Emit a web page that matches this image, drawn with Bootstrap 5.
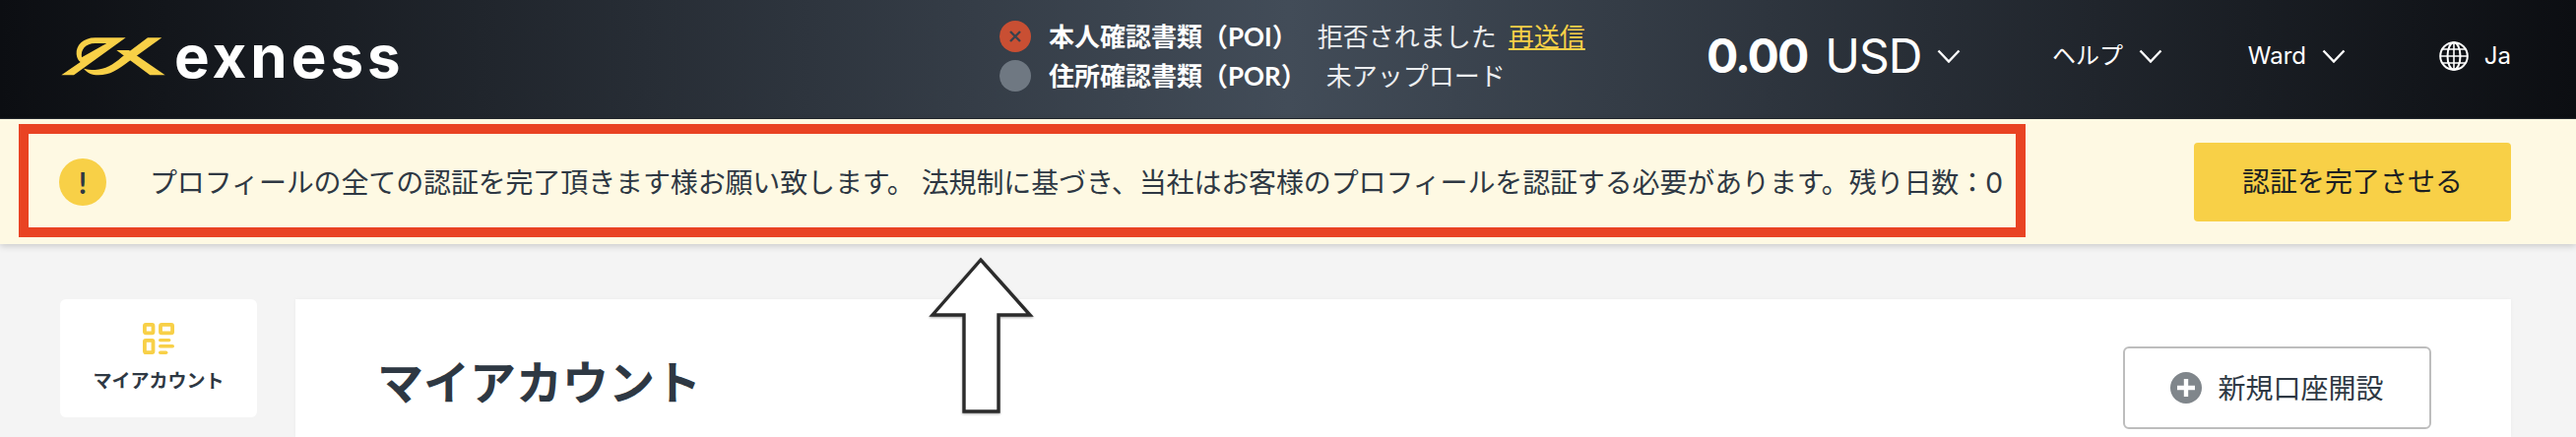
<!DOCTYPE html>
<html lang="ja">
<head>
    <meta charset="UTF-8">
    <meta name="viewport" content="width=device-width, initial-scale=1.0">
    <title>Exness</title>
    <link href="https://cdn.jsdelivr.net/npm/bootstrap@5.3.2/dist/css/bootstrap.min.css" rel="stylesheet">
    <style>
        :root {
            --gold: #f8d047;
            --ink: #2e3843;
        }

        html, body {
            height: 444px;
            overflow: hidden;
        }

        body {
            background-color: #f4f4f4;
            color: var(--ink);
            font-family: Lato, "Noto Sans CJK JP", sans-serif;
        }

        /* header */
        .top-bar {
            height: 121px;
            padding: 0 66px 6px 55px;
            color: #fff;
            background: linear-gradient(90deg, #0c0e12 0, #424c58 50%, #0c0e12 100%);
            border-bottom: 1px solid #23282e;
        }

        .brand {
            width: 960px;
        }

        .brand-name {
            margin-left: 2px;
            font-family: Inter, sans-serif;
            font-size: 60px;
            font-weight: 700;
            line-height: 1;
            letter-spacing: 4px;
        }

        .kyc-block {
            width: 718px;
            gap: 8px;
            font-size: 26px;
            line-height: 32px;
        }

        .kyc-dot {
            width: 32px;
            height: 32px;
            margin-right: 18px;
            border-radius: 50%;
            background-color: #6f7882;
        }

        .kyc-dot.rejected {
            background-color: #c94f33;
        }

        .kyc-state {
            margin-left: 20px;
            color: #eceef0;
        }

        .kyc-link {
            margin-left: 12px;
            color: var(--gold);
        }

        .balance {
            width: 351px;
            font-family: Inter, "Noto Sans CJK JP", sans-serif;
            font-size: 48px;
            line-height: 1;
            letter-spacing: -1px;
        }

        .balance b {
            margin-right: 18px;
            font-weight: 700;
            letter-spacing: -2px;
        }

        .top-item {
            font-family: Inter, "Noto Sans CJK JP", sans-serif;
            font-size: 24px;
        }

        .chevron {
            flex: none;
            margin-left: 16px;
        }

        /* banner */
        .notice-bar {
            position: relative;
            height: 127px;
            padding-left: 19px;
            background-color: #fef9e3;
            box-shadow: 0 2px 7px rgba(0, 0, 0, .18);
        }

        .notice-box {
            width: 2038px;
            height: 115px;
            margin-top: 5px;
            padding: 2px 0 0 31px;
            border: 10px solid #e94323;
        }

        .notice-icon {
            flex: none;
            width: 48px;
            height: 48px;
            margin-right: 44px;
            border-radius: 50%;
            background-color: var(--gold);
            font-size: 30px;
            font-weight: 700;
            line-height: 48px;
            text-align: center;
        }

        .notice-text {
            font-size: 28px;
            letter-spacing: -.14px;
            white-space: nowrap;
        }

        .btn-finish {
            width: 322px;
            height: 80px;
            margin: 24px 0 0 171px;
            padding-bottom: 9px;
            border: 0;
            border-radius: 4px;
            background-color: var(--gold);
            color: #1c1f22;
            font-size: 28px;
        }

        /* content */
        .page-body {
            gap: 39px;
            padding: 56px 66px 0 61px;
        }

        .side-card {
            flex: none;
            width: 200px;
            height: 120px;
            border-radius: 6px;
            padding-top: 24px;
        }

        .side-label {
            margin-top: 13px;
            font-size: 19px;
            font-weight: 700;
            line-height: 28px;
        }

        .main-card {
            height: 140px;
            padding: 48px 81px 0 83px;
            border-radius: 0;
            box-shadow: 0 0 4px rgba(0, 0, 0, .04);
        }

        .page-title {
            margin: 0;
            font-size: 47px;
            font-weight: 700;
            line-height: 72px;
        }

        .btn-new {
            width: 313px;
            height: 84px;
            border: 2px solid #bdbdbd;
            border-radius: 6px;
            background-color: #fff;
            color: var(--ink);
            font-size: 28px;
            gap: 16px;
        }

        /* annotation over the page */
        .up-arrow {
            position: absolute;
            left: 940px;
            top: 258px;
        }
    </style>
</head>
<body>
    <header class="top-bar d-flex align-items-center">
        <div class="brand d-flex align-items-center">
            <svg width="120" height="56" viewBox="0 0 360 168" aria-hidden="true">
                <path fill="#f8d047" fill-rule="evenodd" d="M218 28H125C88 28 66 52 68 78C69 90 74 98 80 102L22 142H60ZM160 45H125C95 45 80 65 84 88Z"/>
                <path fill="#f8d047" d="M328 28H285L205 88C180 110 155 125 125 126C110 126 100 124 90 122C100 135 115 142 135 142C170 142 195 125 225 102Z"/>
                <path fill="#f8d047" d="M190 66H228L338 142H292Z"/>
            </svg>
            <span class="brand-name">exness</span>
        </div>

        <div class="kyc-block d-flex flex-column">
            <div class="d-flex align-items-center">
                <span class="kyc-dot rejected d-flex align-items-center justify-content-center">
                    <svg width="14" height="14" viewBox="0 0 14 14" aria-hidden="true"><path d="M2 2l10 10M12 2L2 12" stroke="#39424d" stroke-width="2.4" fill="none"/></svg>
                </span>
                <strong>本人確認書類（POI）</strong>
                <span class="kyc-state">拒否されました</span>
                <a class="kyc-link" href="#">再送信</a>
            </div>
            <div class="d-flex align-items-center">
                <span class="kyc-dot"></span>
                <strong>住所確認書類（POR）</strong>
                <span class="kyc-state">未アップロード</span>
            </div>
        </div>

        <div class="balance d-flex align-items-center">
            <b>0.00</b>USD
            <svg class="chevron" width="24" height="14" viewBox="0 0 24 14" aria-hidden="true"><path d="M1.5 1.5L12 12.5 22.5 1.5" stroke="#fff" stroke-width="2.4" fill="none"/></svg>
        </div>

        <div class="top-item d-flex align-items-center">ヘルプ
            <svg class="chevron" width="24" height="14" viewBox="0 0 24 14" aria-hidden="true"><path d="M1.5 1.5L12 12.5 22.5 1.5" stroke="#fff" stroke-width="2.4" fill="none"/></svg>
        </div>

        <div class="top-item d-flex align-items-center ms-auto me-2">Ward
            <svg class="chevron" width="24" height="14" viewBox="0 0 24 14" aria-hidden="true"><path d="M1.5 1.5L12 12.5 22.5 1.5" stroke="#fff" stroke-width="2.4" fill="none"/></svg>
        </div>

        <div class="top-item d-flex align-items-center gap-3 ms-auto">
            <svg width="30" height="30" viewBox="0 0 30 30" fill="none" stroke="#fff" stroke-width="2" aria-hidden="true">
                <circle cx="15" cy="15" r="13.8"/>
                <ellipse cx="15" cy="15" rx="6.5" ry="13.8"/>
                <path d="M15 1v28M1.5 15h27M3.5 8h23M3.5 22h23" stroke-width="1.6"/>
            </svg>
            <span>Ja</span>
        </div>
    </header>

    <div class="notice-bar d-flex align-items-start">
        <div class="notice-box d-flex align-items-center">
            <span class="notice-icon">!</span>
            <span class="notice-text">プロフィールの全ての認証を完了頂きます様お願い致します。 法規制に基づき、当社はお客様のプロフィールを認証する必要があります。残り日数：0</span>
        </div>
        <button type="button" class="btn btn-finish">認証を完了させる</button>
    </div>

    <main class="page-body d-flex">
        <div class="card side-card border-0 align-items-center">
            <svg width="32" height="32" viewBox="0 0 32 32" aria-hidden="true">
                <g fill="none" stroke="#f8d047" stroke-width="3.8">
                    <rect x="1.9" y="1.9" width="8.6" height="8.4" rx="1"/>
                    <rect x="18" y="1.9" width="12.1" height="8.4" rx="1"/>
                    <rect x="1.9" y="17.8" width="8.6" height="12.3" rx="1"/>
                </g>
                <g fill="#f8d047">
                    <rect x="16" y="16" width="12.4" height="3.2" rx="1.6"/>
                    <rect x="16" y="22" width="16" height="3.6" rx="1.8"/>
                    <rect x="16" y="28.4" width="9.4" height="3.6" rx="1.8"/>
                </g>
            </svg>
            <div class="side-label">マイアカウント</div>
        </div>

        <div class="card main-card border-0 flex-grow-1 flex-row justify-content-between align-items-start">
            <h1 class="page-title">マイアカウント</h1>
            <button type="button" class="btn btn-new d-flex align-items-center justify-content-center">
                <svg width="32" height="32" viewBox="0 0 32 32" aria-hidden="true">
                    <circle cx="16" cy="16" r="16" fill="#80868b"/>
                    <path d="M16 7v18M7 16h18" stroke="#fff" stroke-width="4.4"/>
                </svg>
                新規口座開設
            </button>
        </div>
    </main>

    <svg class="up-arrow" width="114" height="168" viewBox="0 0 114 168" aria-hidden="true">
        <path d="M56 6L7 62H39V160H74V62H106Z" fill="#fff" stroke="#2b2b2b" stroke-width="3.4" style="filter:drop-shadow(0 1px 1px rgba(0,0,0,.35))"/>
    </svg>

    <script src="https://cdn.jsdelivr.net/npm/bootstrap@5.3.2/dist/js/bootstrap.bundle.min.js"></script>
</body>
</html>
